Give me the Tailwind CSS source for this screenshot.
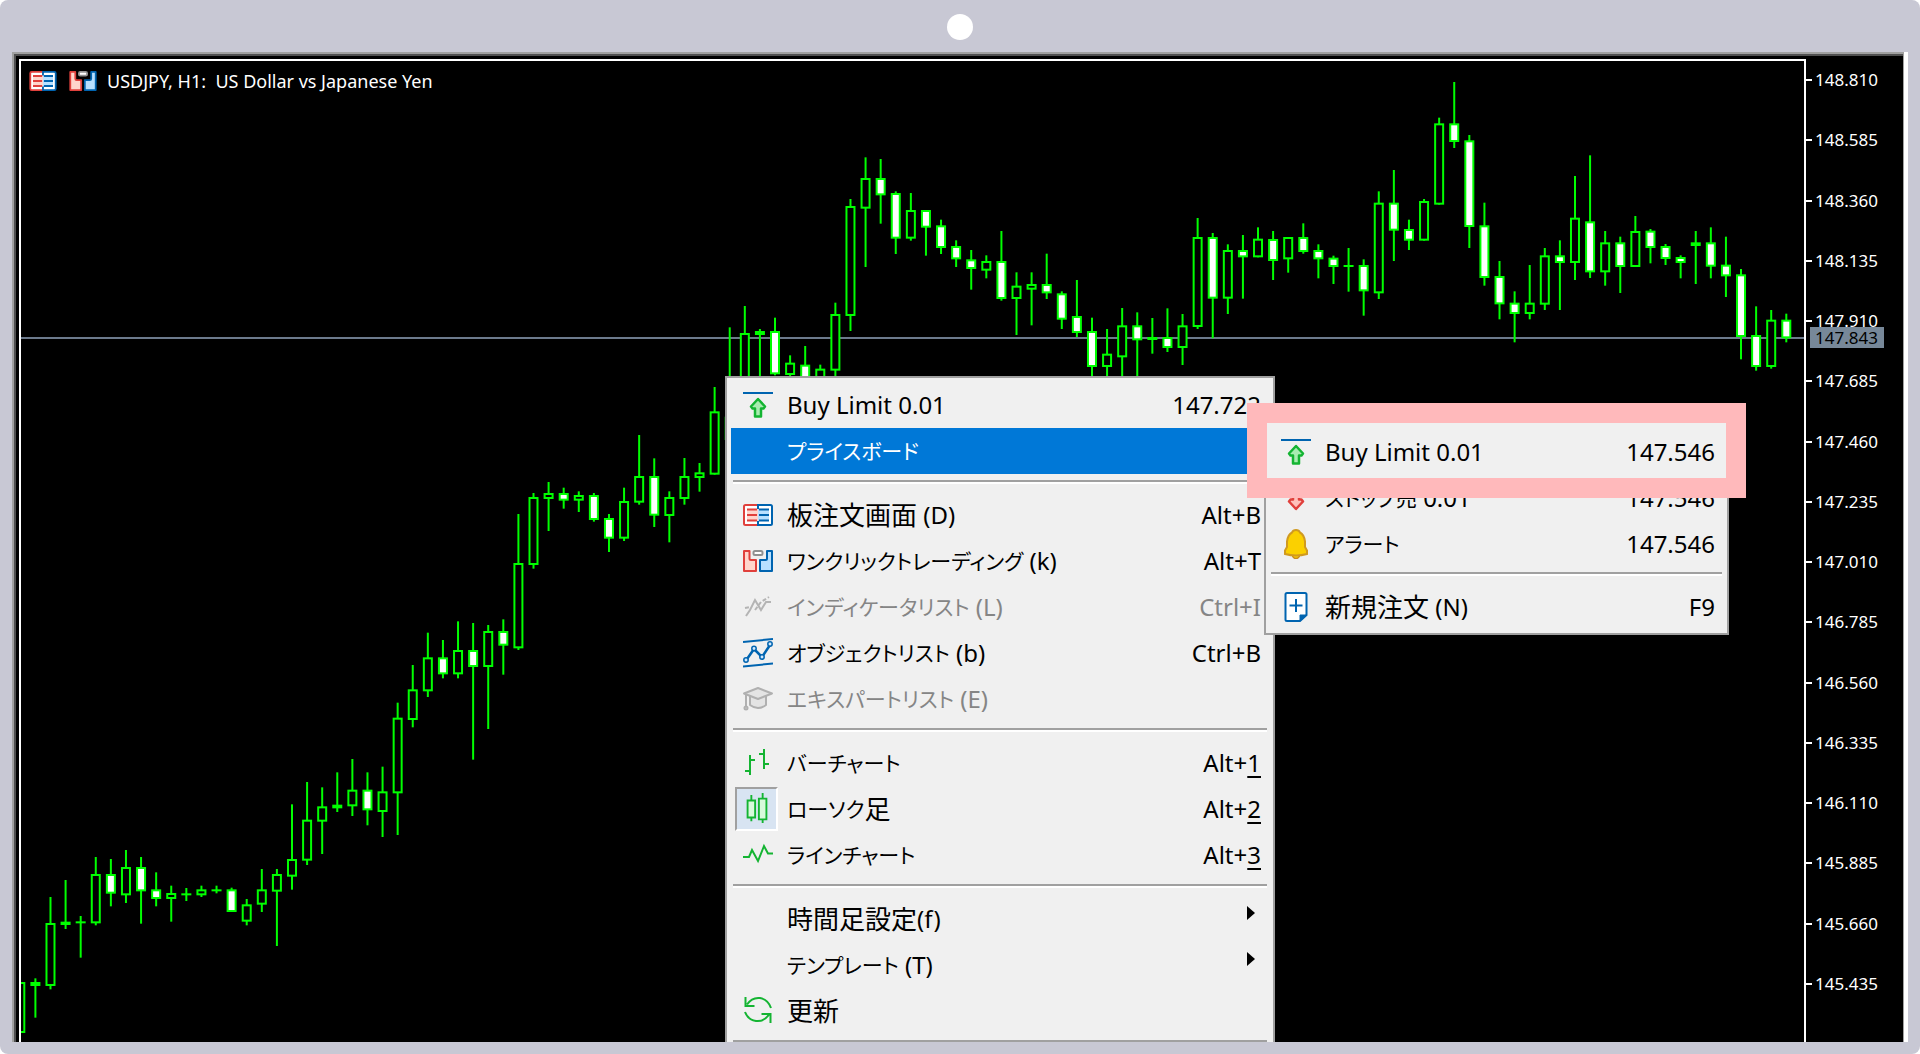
<!DOCTYPE html>
<html lang="ja">
<head>
<meta charset="utf-8">
<meta name="viewport" content="width=device-width, initial-scale=1">
<title>USDJPY, H1</title>
<script src="https://cdn.jsdelivr.net/npm/@tailwindcss/browser@4"></script>
</head>
<body class="bg-white">
<svg class="hidden" aria-hidden="true">
  <symbol id="i-limit" viewBox="0 0 30 30"><path d="M0 3h30" stroke="#0064b0" stroke-width="2"/><path d="M15 9l7 7.5-1.5 2H18V26.500h-6V18.500H9.500L8 16.500z" fill="#a8ecb0" stroke="#14b432" stroke-width="2.500" stroke-linejoin="round"/></symbol>
  <symbol id="i-stop" viewBox="0 0 30 30"><path d="M0 3h30" stroke="#0064b0" stroke-width="2"/><path d="M15 26l7-7.500-1.500-2H18V8h-6v8.500H9.500L8 18.500z" fill="#ffc0ba" stroke="#e0403c" stroke-width="2.500" stroke-linejoin="round"/></symbol>
  <symbol id="i-depth" viewBox="0 0 30 22"><path d="M15 1H2.500Q1 1 1 2.500v17Q1 21 2.500 21H15z" fill="#fff" stroke="#e0403c" stroke-width="2"/><path d="M15 1h12.500Q29 1 29 2.500v17q0 1.500-1.500 1.500H15z" fill="#fff" stroke="#0064b0" stroke-width="2"/><path d="M4 5h11v12H4z" fill="#ffd5cc"/><path d="M15 5h11v12H15z" fill="#b8e0ff"/><path d="M4 5.500h10M4 11h10M4 16.500h10" stroke="#e0403c" stroke-width="2"/><path d="M16 5.500h10M16 11h10M16 16.500h10" stroke="#0064b0" stroke-width="2"/></symbol>
  <symbol id="i-click" viewBox="0 0 30 22"><path d="M1 1h5.500v7.500q0 1.500 1.500 1.500h5v11H1z" fill="#ffd5cc" stroke="#e0403c" stroke-width="2" stroke-linejoin="round"/><path d="M29 1h-5v7.500q0 1.500-1.500 1.500H17v11h12z" fill="#b8e0ff" stroke="#0064b0" stroke-width="2" stroke-linejoin="round"/><rect x="10.500" y="1" width="9" height="4" rx="1.500" fill="#fff" stroke="#909090" stroke-width="2"/></symbol>
  <symbol id="i-ind" viewBox="0 0 30 30"><path d="M3 24l4-6 5-10 6 10 5-8h5" fill="none" stroke="#b4b4b4" stroke-width="2"/><path d="M2 16l5-1M12 18l6-8 8-5" fill="none" stroke="#b4b4b4" stroke-width="2" stroke-dasharray="4 2"/></symbol>
  <symbol id="i-obj" viewBox="0 0 30 30"><path d="M0 4L30 1M0 28.500l30-3" stroke="#0064b0" stroke-width="2"/><path d="M4 21l7-10 8 8 8-12" fill="none" stroke="#0064b0" stroke-width="2.500"/><g fill="#cfe8ff" stroke="#0064b0" stroke-width="1.500"><circle cx="3" cy="22" r="2.200"/><circle cx="11" cy="10.500" r="2.200"/><circle cx="19" cy="19" r="2.200"/><circle cx="27" cy="6" r="2.200"/></g></symbol>
  <symbol id="i-exp" viewBox="0 0 30 30"><g fill="#e4e4e4" stroke="#b0b0b0" stroke-width="2" stroke-linejoin="round"><path d="M7 12v9q8 6 16 0v-9"/><path d="M1 9.500L15 4l14 5.500L15 15z"/><path d="M3 11v11" fill="none"/><circle cx="3" cy="24" r="1.500"/></g></symbol>
  <symbol id="i-bar" viewBox="0 0 30 30"><path d="M7 7v20M2 23h5M7 12h5M21 1v20M16 6h5M21 16h5" fill="none" stroke="#14b432" stroke-width="2"/></symbol>
  <symbol id="i-candle" viewBox="0 0 30 34"><g fill="#d8fadb" stroke="#14b432" stroke-width="2"><path d="M9 2v28M21 0v32"/><path d="M5 8h8v18H5zM17 6h8v22h-8z"/></g></symbol>
  <symbol id="i-line" viewBox="0 0 30 30"><path d="M0 17h6l3-7 6 11 6-15 4 7.500h5" fill="none" stroke="#14b432" stroke-width="2"/></symbol>
  <symbol id="i-refresh" viewBox="0 0 30 30"><path d="M2.500 1v9h9M4 8.500Q9 1 17 2q8 1.500 11 10M27.500 27v-9h-9M26 18.500q-5 7.500-13 6.500Q5 24 2 16" fill="none" stroke="#14b432" stroke-width="2"/></symbol>
  <symbol id="i-bell" viewBox="0 0 30 30"><circle cx="15" cy="26" r="3.500" fill="#fbd000" stroke="#c98a1e" stroke-width="1.500"/><path d="M15 1q3 0 4 2.500 4 2 5 9V18l2 3.500v3.500q-11 3-22 0v-3.500L6 18v-5.500q1-7 5-9Q12 1 15 1z" fill="#fbd000" stroke="#d09a20" stroke-width="2"/></symbol>
  <symbol id="i-new" viewBox="0 0 30 30"><path d="M6 1h18q1.500 0 1.500 1.500V23L19 29H6q-1.500 0-1.500-1.500v-25Q4.500 1 6 1z" fill="#fff" stroke="#0064b0" stroke-width="2"/><path d="M25.500 23H19v6z" fill="#0064b0" stroke="#0064b0"/><path d="M15 7v13M8.500 13.500h13" stroke="#0064b0" stroke-width="2"/></symbol>
  <symbol id="i-arrow" viewBox="0 0 8 14"><path d="M0 0l8 7-8 7z" fill="currentColor"/></symbol>
</svg>

<main class="flex h-screen min-h-[600px] flex-col overflow-hidden rounded-lg bg-[#c8c8d4] px-3 pb-3 font-['Noto_Sans','Noto_Sans_CJK_JP',sans-serif]">
  <header class="flex h-[52px] shrink-0 items-center justify-center pt-[2px]"><span class="size-[26px] rounded-full bg-white"></span></header>

  <div class="flex min-h-0 grow border-r-4 border-white bg-white">
  <div class="flex min-h-0 min-w-0 grow border-t-2 border-r border-l-2 border-[#a0a0a0] bg-black">
  <div class="flex min-h-0 min-w-0 grow border-t-2 border-l-2 border-[#505050] pt-[3px] pl-[3px]">
    <!-- plot -->
    <section class="relative min-w-0 grow overflow-hidden border-2 border-b-0 border-white" aria-label="USDJPY H1">
      <svg class="absolute inset-0 size-full" aria-hidden="true"><g transform="translate(-21 -61)">
        <path d="M0 338H3000" stroke="#6c7a8c" stroke-width="2"/>
        <g id="candles" stroke="#00ff00" stroke-width="2"></g>
      </g></svg>
      <div class="relative flex items-center pt-2 pl-2 text-lg leading-6 text-white">
        <button class="mr-3" aria-label="板注文画面"><svg class="h-5 w-7"><use href="#i-depth"/></svg></button>
        <button class="mr-[10px]" aria-label="ワンクリックトレーディング"><svg class="h-5 w-7"><use href="#i-click"/></svg></button>
        <h1 class="whitespace-nowrap">USDJPY, H1:&nbsp; US Dollar vs Japanese Yen</h1>
      </div>

      <!-- chart context menu -->
      <div role="menu" class="absolute top-[315px] left-[704px] w-[550px] border-2 border-[#a0a0a0] bg-[#f0f0f0] px-1 pt-1 text-2xl leading-[46px] text-black">
        <button role="menuitem" class="flex h-[46px] w-full items-center pr-2 pl-3"><svg class="mr-[14px] size-[30px]"><use href="#i-limit"/></svg><span>Buy Limit 0.01</span><span class="ml-auto">147.722</span></button>
        <button role="menuitem" class="flex h-[46px] w-full items-center bg-[#0078d7] pr-[14px] pl-14 text-white"><span class="text-[21px] [font-feature-settings:'palt']">プライスボード</span><svg class="mb-3 ml-auto h-[14px] w-2"><use href="#i-arrow"/></svg></button>
        <hr class="mx-[2px] mt-[6px] mb-2 h-1 border-t-2 border-[#a0a0a0] bg-white">
        <button role="menuitem" class="flex h-[46px] w-full items-center pr-2 pl-3"><svg class="mr-[14px] h-[22px] w-[30px]"><use href="#i-depth"/></svg><span class="text-[26px]">板注文画面</span><span>&nbsp;(D)</span><span class="ml-auto">Alt+B</span></button>
        <button role="menuitem" class="flex h-[46px] w-full items-center pr-2 pl-3"><svg class="mr-[14px] h-[22px] w-[30px]"><use href="#i-click"/></svg><span class="text-[21px] [font-feature-settings:'palt']">ワンクリックトレーディング</span><span>&nbsp;(k)</span><span class="ml-auto">Alt+T</span></button>
        <button role="menuitem" disabled class="flex h-[46px] w-full items-center pr-2 pl-3 text-[#858585]"><svg class="mr-[14px] size-[30px]"><use href="#i-ind"/></svg><span class="text-[21px] [font-feature-settings:'palt']">インディケータリスト</span><span>&nbsp;(L)</span><span class="ml-auto">Ctrl+I</span></button>
        <button role="menuitem" class="flex h-[46px] w-full items-center pr-2 pl-3"><svg class="mr-[14px] size-[30px]"><use href="#i-obj"/></svg><span class="text-[21px] [font-feature-settings:'palt']">オブジェクトリスト</span><span>&nbsp;(b)</span><span class="ml-auto">Ctrl+B</span></button>
        <button role="menuitem" disabled class="flex h-[46px] w-full items-center pr-2 pl-3 text-[#858585]"><svg class="mr-[14px] size-[30px]"><use href="#i-exp"/></svg><span class="text-[21px] [font-feature-settings:'palt']">エキスパートリスト</span><span>&nbsp;(E)</span></button>
        <hr class="mx-[2px] mt-[6px] mb-2 h-1 border-t-2 border-[#a0a0a0] bg-white">
        <button role="menuitem" class="flex h-[46px] w-full items-center pr-2 pl-3"><svg class="mr-[14px] size-[30px]"><use href="#i-bar"/></svg><span class="text-[21px] [font-feature-settings:'palt']">バーチャート</span><span class="ml-auto">Alt+<u class="underline-offset-4">1</u></span></button>
        <button role="menuitem" class="flex h-[46px] w-full items-center pr-2 pl-1"><span class="mr-[9px] flex h-[44px] w-[43px] items-center justify-center border-2 border-t-[#a0a0a0] border-r-white border-b-white border-l-[#a0a0a0] bg-[#d8e4f2]"><svg class="h-[32px] w-[30px]"><use href="#i-candle"/></svg></span><span class="text-[21px] [font-feature-settings:'palt']">ローソク</span><span class="text-[26px]">足</span><span class="ml-auto">Alt+<u class="underline-offset-4">2</u></span></button>
        <button role="menuitem" class="flex h-[46px] w-full items-center pr-2 pl-3"><svg class="mr-[14px] size-[30px]"><use href="#i-line"/></svg><span class="text-[21px] [font-feature-settings:'palt']">ラインチャート</span><span class="ml-auto">Alt+<u class="underline-offset-4">3</u></span></button>
        <hr class="mx-[2px] mt-[6px] mb-2 h-1 border-t-2 border-[#a0a0a0] bg-white">
        <button role="menuitem" class="flex h-[46px] w-full items-center pr-[14px] pl-14"><span class="text-[26px]">時間足設定</span><span>(f)</span><svg class="mb-3 ml-auto h-[14px] w-2"><use href="#i-arrow"/></svg></button>
        <button role="menuitem" class="flex h-[46px] w-full items-center pr-[14px] pl-14"><span class="text-[21px] [font-feature-settings:'palt']">テンプレート</span><span>&nbsp;(T)</span><svg class="mb-3 ml-auto h-[14px] w-2"><use href="#i-arrow"/></svg></button>
        <button role="menuitem" class="flex h-[46px] w-full items-center pr-2 pl-3"><svg class="mr-[14px] size-[30px]"><use href="#i-refresh"/></svg><span class="text-[26px]">更新</span></button>
        <hr class="mx-[2px] mt-[6px] mb-2 h-1 border-t-2 border-[#a0a0a0] bg-white">
      </div>

      <!-- price board submenu -->
      <div role="menu" class="absolute top-[362px] left-[1243px] w-[465px] border-2 border-t-0 border-[#a0a0a0] bg-[#f0f0f0] px-[5px] pt-[6px] pb-[3px] text-2xl leading-[46px] text-black">
        <button role="menuitem" class="flex h-[46px] w-full items-center pr-[7px] pl-[10px]"><svg class="mr-[14px] size-[30px]"><use href="#i-limit"/></svg><span>Buy Limit 0.01</span><span class="ml-auto">147.546</span></button>
        <button role="menuitem" class="flex h-[46px] w-full items-center pr-[7px] pl-[10px]"><svg class="mr-[14px] size-[30px]"><use href="#i-stop"/></svg><span class="text-[21px] [font-feature-settings:'palt']">ストップ売</span><span>&nbsp;0.01</span><span class="ml-auto">147.546</span></button>
        <button role="menuitem" class="flex h-[46px] w-full items-center pr-[7px] pl-[10px]"><svg class="mr-[14px] size-[30px]"><use href="#i-bell"/></svg><span class="text-[21px] [font-feature-settings:'palt']">アラート</span><span class="ml-auto">147.546</span></button>
        <hr class="mt-[5px] mb-2 h-1 border-t-2 border-[#a0a0a0] bg-white">
        <button role="menuitem" class="flex h-[46px] w-full items-center pr-[7px] pl-[10px]"><svg class="mr-[14px] size-[30px]"><use href="#i-new"/></svg><span class="text-[26px]">新規注文</span><span>&nbsp;(N)</span><span class="ml-auto">F9</span></button>
      </div>
      <div class="pointer-events-none absolute top-[342px] left-[1226px] h-[95px] w-[499px] border-20 border-[#ffb9bb]"></div>
    </section>

    <!-- price axis -->
    <aside class="relative w-[97px] shrink-0 text-[17px] leading-5 text-white">
      <ol id="axis" class="flex h-full flex-col justify-between pt-[11px] pb-12"></ol>
      <output class="absolute top-[268px] left-1 h-[21px] w-[74px] bg-[#778899] pl-[5px] leading-[21px] text-black">147.843</output>
    </aside>
  </div>
  </div>
  </div>
</main>

<script>
// Each block: [vertical origin, rows of high, body top, body bottom, low (thirds of a pixel), u = rising / d = falling / x = doji]
const blocks = [
[740, `726 726 879 879 u|715 726 738 833 u|471 549 738 748 u|420 545 555 567 u|528 544 550 653 x|351 402 550 556 u|357 402 461 499 d|330 381 466 489 u|351 381 454 551 d|397 448 477 499 d|437 459 477 545 u|444 460 466 483 x|437 448 466 471 u|437 448 454 460 x|443 448 516 516 d|477 493 545 556 u|387 448 494 516 u|387 402 455 618 u|193 357 410 449 u|126 239 362 375 u|142 199 245 342 u|97 194 205 216 u|57 149 199 228 u|97 149 211 256 d|80 154 216 291 u|-112 -67 160 285 u`],
[460, `615 688 780 802 u|518 592 694 711 u|540 592 643 655 d|484 570 643 655 u|489 570 621 899 d|495 513 621 807 u|478 513 557 644 d|162 309 565 570 u|99 111 315 326 u|66 99 117 213 u|83 99 122 146 d|94 105 122 156 u|99 105 180 185 d|162 174 236 276 d|83 123 236 243 u|-75 48 128 134 u|-5 48 167 201 d|94 111 168 247 u|-6 48 117 134 u|9 37 54 95 u|-219 -146 44 44 u`],
[140, `562 830 900 900 u|498 579 800 800 u|567 573 585 800 u|533 573 703 706 d|646 668 705 800 u|618 674 800 800 d|674 686 800 800 u|488 522 692 800 u|177 198 528 573 u|52 114 206 381 u|57 114 166 251 d|154 159 296 342 d|159 210 296 302 u|210 210 263 347 d|239 256 324 342 d|301 318 358 381 d|330 358 387 449 d|346 363 392 415 u|273 363 477 482 d|397 437 477 585 u|397 432 449 556 u|341 432 460 477 d|454 460 539 567 d|420 528 579 591 d|533 573 681 800 d|567 641 681 800 u`],
[180, `384 436 532 800 u|397 436 481 800 d|414 471 480 521 u|385 471 504 516 d|402 436 504 555 u|114 171 441 447 u|159 171 356 475 d|193 210 356 402 u|165 210 232 356 d|142 176 232 232 u|153 177 243 300 d|171 171 238 278 u|130 171 216 221 d|193 210 238 295 d|227 233 261 312 d|204 255 261 335 x|238 255 334 407 d|34 68 340 357 u`],
[70, `300 398 482 573 d|449 477 512 540 d|387 393 512 512 u|143 160 404 404 u|36 160 216 234 d|195 211 471 534 d|398 466 624 647 d|573 618 703 748 d|664 698 732 817 d|585 698 732 748 u|534 556 704 720 u|511 556 579 720 d|318 443 579 630 u|256 454 607 624 d|483 517 607 647 u|500 517 591 669 d|438 483 591 591 u`],
[140, `267 272 324 370 d|312 318 357 375 d|346 351 369 415 d|273 307 318 432 u|262 307 380 415 d|290 374 409 471 d|387 403 591 658 d|499 585 681 692 d|510 539 681 686 u|521 539 595 607 d`]
];
let n = -1, out = '';
for (const [oy, rows] of blocks) for (const row of rows.split('|')) {
  const p = row.split(' '), [h, t, b, l] = p.slice(0, 4).map(v => oy + v / 3), x = 35.4 + 15.094 * n++;
  out += `<path d="M${x} ${h}V${l}"/>`;
  out += p[4] === 'x' ? `<path d="M${x - 5} ${(t + b) / 2}H${x + 5}"/>`
    : `<rect x="${x - 4}" y="${t + 1}" width="8" height="${Math.max(1, b - t - 2)}" fill="${p[4] === 'd' ? '#fff' : '#000'}"/>`;
}
document.getElementById('candles').innerHTML = out;
document.getElementById('axis').innerHTML = Array.from({ length: 16 }, (_, i) =>
  `<li class="flex items-center"><span class="mr-[3px] h-[2px] w-[6px] bg-white"></span>${(148.81 - .225 * i).toFixed(3)}</li>`).join('');
</script>
</body>
</html>
